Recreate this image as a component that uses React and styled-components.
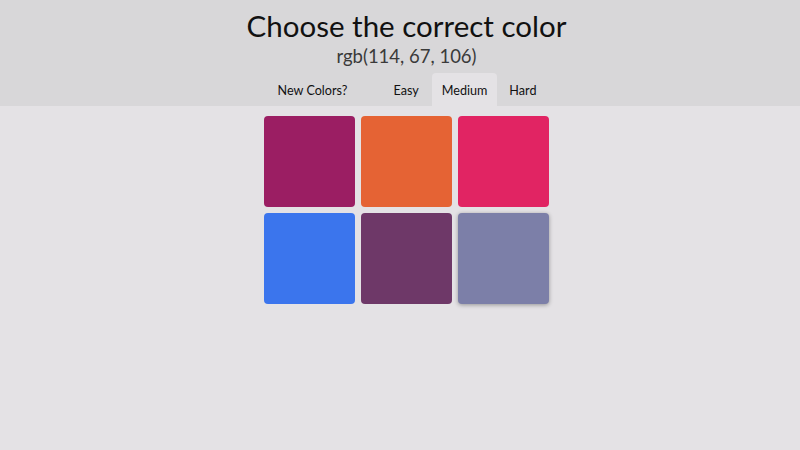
import React from "react";
import styled, { createGlobalStyle } from "styled-components";

const Global = createGlobalStyle`
  html, body { margin: 0; padding: 0; background: #e4e2e5; }
  body { font-family: Lato, "Open Sans", sans-serif; color: #111; }
`;

const Page = styled.div`
  width: 800px;
  height: 450px;
  background: #e4e2e5;
  overflow: hidden;
`;

const Header = styled.header`
  background: #d8d7d9;
  display: flex;
  flex-direction: column;
  align-items: center;
  padding-left: 13px;
  height: 106px;
  box-sizing: border-box;
`;

const Title = styled.h1`
  margin: 9px 0 0;
  font-size: 29.5px;
  font-weight: 400;
  line-height: 34px;
  color: #111;
`;

const Subtitle = styled.div`
  font-size: 18.5px;
  font-weight: 400;
  line-height: 22px;
  color: #3a3a3a;
  margin-top: 2px;
`;

const Nav = styled.nav`
  display: flex;
  align-items: stretch;
  margin-top: auto;
  margin-left: 3px;
  height: 33px;
`;

const Button = styled.button`
  font-family: Lato, sans-serif;
  font-size: 12.6px;
  color: #111;
  background: ${(p) => (p.$active ? "#e4e2e5" : "transparent")};
  border: none;
  border-radius: 4px 4px 0 0;
  padding: 1px 10px 0;
  margin-right: ${(p) => p.$gap || 2}px;
  cursor: pointer;
`;

const Board = styled.main`
  display: flex;
  justify-content: center;
  padding: 10px 0 0 13px;
`;

const Grid = styled.div`
  display: grid;
  grid-template-columns: repeat(3, 91px);
  grid-auto-rows: 91px;
  gap: 6px;
`;

const Square = styled.div`
  border-radius: 4px;
  background: ${(p) => p.$color};
  box-shadow: ${(p) => (p.$hover ? "0 1px 4px rgba(0,0,0,0.35)" : "none")};
`;

const colors = [
  "rgb(155, 30, 99)",
  "rgb(229, 99, 52)",
  "rgb(225, 36, 99)",
  "rgb(59, 117, 237)",
  "rgb(110, 56, 104)",
  "rgb(124, 127, 168)",
];

export default function App() {
  return (
    <Page>
      <Global />
      <Header>
        <Title>Choose the correct color</Title>
        <Subtitle>rgb(114, 67, 106)</Subtitle>
        <Nav>
          <Button $gap={26}>New Colors?</Button>
          <Button $gap={3}>Easy</Button>
          <Button $active $gap={2}>Medium</Button>
          <Button>Hard</Button>
        </Nav>
      </Header>
      <Board>
        <Grid>
          {colors.map((c, i) => (
            <Square key={i} $color={c} $hover={i === 5} />
          ))}
        </Grid>
      </Board>
    </Page>
  );
}
